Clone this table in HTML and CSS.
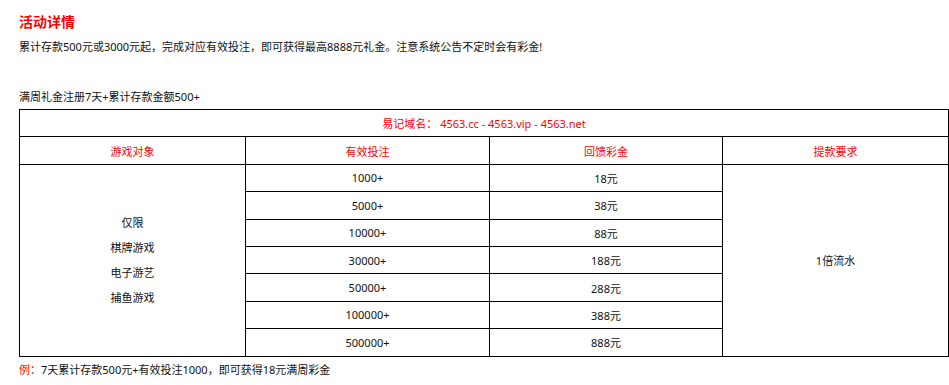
FILE: index.html
```html
<!DOCTYPE html>
<html lang="zh-CN">
<head>
  <meta charset="UTF-8">
  <title>活动详情</title>
  <link rel="stylesheet" href="styles.css">
</head>
<body>
  <div class="page">
    <h2 class="title">活动详情</h2>
    <p class="intro">累计存款500元或3000元起，完成对应有效投注，即可获得最高8888元礼金。注意系统公告不定时会有彩金!</p>
    <p class="sub">满周礼金注册7天+累计存款金额500+</p>
    <table class="bonus">
      <colgroup>
        <col class="c1">
        <col class="c2">
        <col class="c3">
        <col class="c4">
      </colgroup>
      <tr class="domain">
        <td colspan="4">易记域名： 4563.cc - 4563.vip - 4563.net</td>
      </tr>
      <tr class="head">
        <td>游戏对象</td>
        <td>有效投注</td>
        <td>回馈彩金</td>
        <td>提款要求</td>
      </tr>
      <tr>
        <td rowspan="7" class="games">
          <p>仅限</p>
          <p>棋牌游戏</p>
          <p>电子游艺</p>
          <p>捕鱼游戏</p>
        </td>
        <td>1000+</td>
        <td>18元</td>
        <td rowspan="7">1倍流水</td>
      </tr>
      <tr><td>5000+</td><td>38元</td></tr>
      <tr><td>10000+</td><td>88元</td></tr>
      <tr><td>30000+</td><td>188元</td></tr>
      <tr><td>50000+</td><td>288元</td></tr>
      <tr><td>100000+</td><td>388元</td></tr>
      <tr><td>500000+</td><td>888元</td></tr>
    </table>
    <p class="note"><span class="red">例：</span>7天累计存款500元+有效投注1000，即可获得18元满周彩金</p>
  </div>
</body>
</html>
```

FILE: styles.css
```css
body {
  margin: 0;
  background-color: #fff;
  font-family: "Noto Sans", "Noto Sans CJK SC", sans-serif;
  font-size: 11px;
  color: #111;
}
.page {
  padding: 11px 0 0 19px;
}
.title {
  margin: 0;
  font-size: 14px;
  line-height: 22px;
  font-weight: bold;
  color: #ff0000;
}
.intro {
  margin: 3px 0 0;
  line-height: 22px;
}
.sub {
  margin: 28px 0 0;
  line-height: 22px;
}
.bonus {
  margin-top: 1px;
  width: 929px;
  border-collapse: collapse;
  table-layout: fixed;
}
.c1 { width: 226px; }
.c2 { width: 244px; }
.c3 { width: 233px; }
.c4 { width: 226px; }
.bonus td {
  border: 1px solid #000;
  text-align: center;
  padding: 0;
  height: 26px;
}
.bonus tr {
  height: 27.4px;
}
.domain td,
.head td {
  color: #ff0000;
}
.games {
  padding-top: 3px;
}
.games p {
  margin: 0;
  line-height: 25px;
}
.note {
  margin: 2px 0 0;
  line-height: 22px;
}
.red {
  color: #ff0000;
}
```
